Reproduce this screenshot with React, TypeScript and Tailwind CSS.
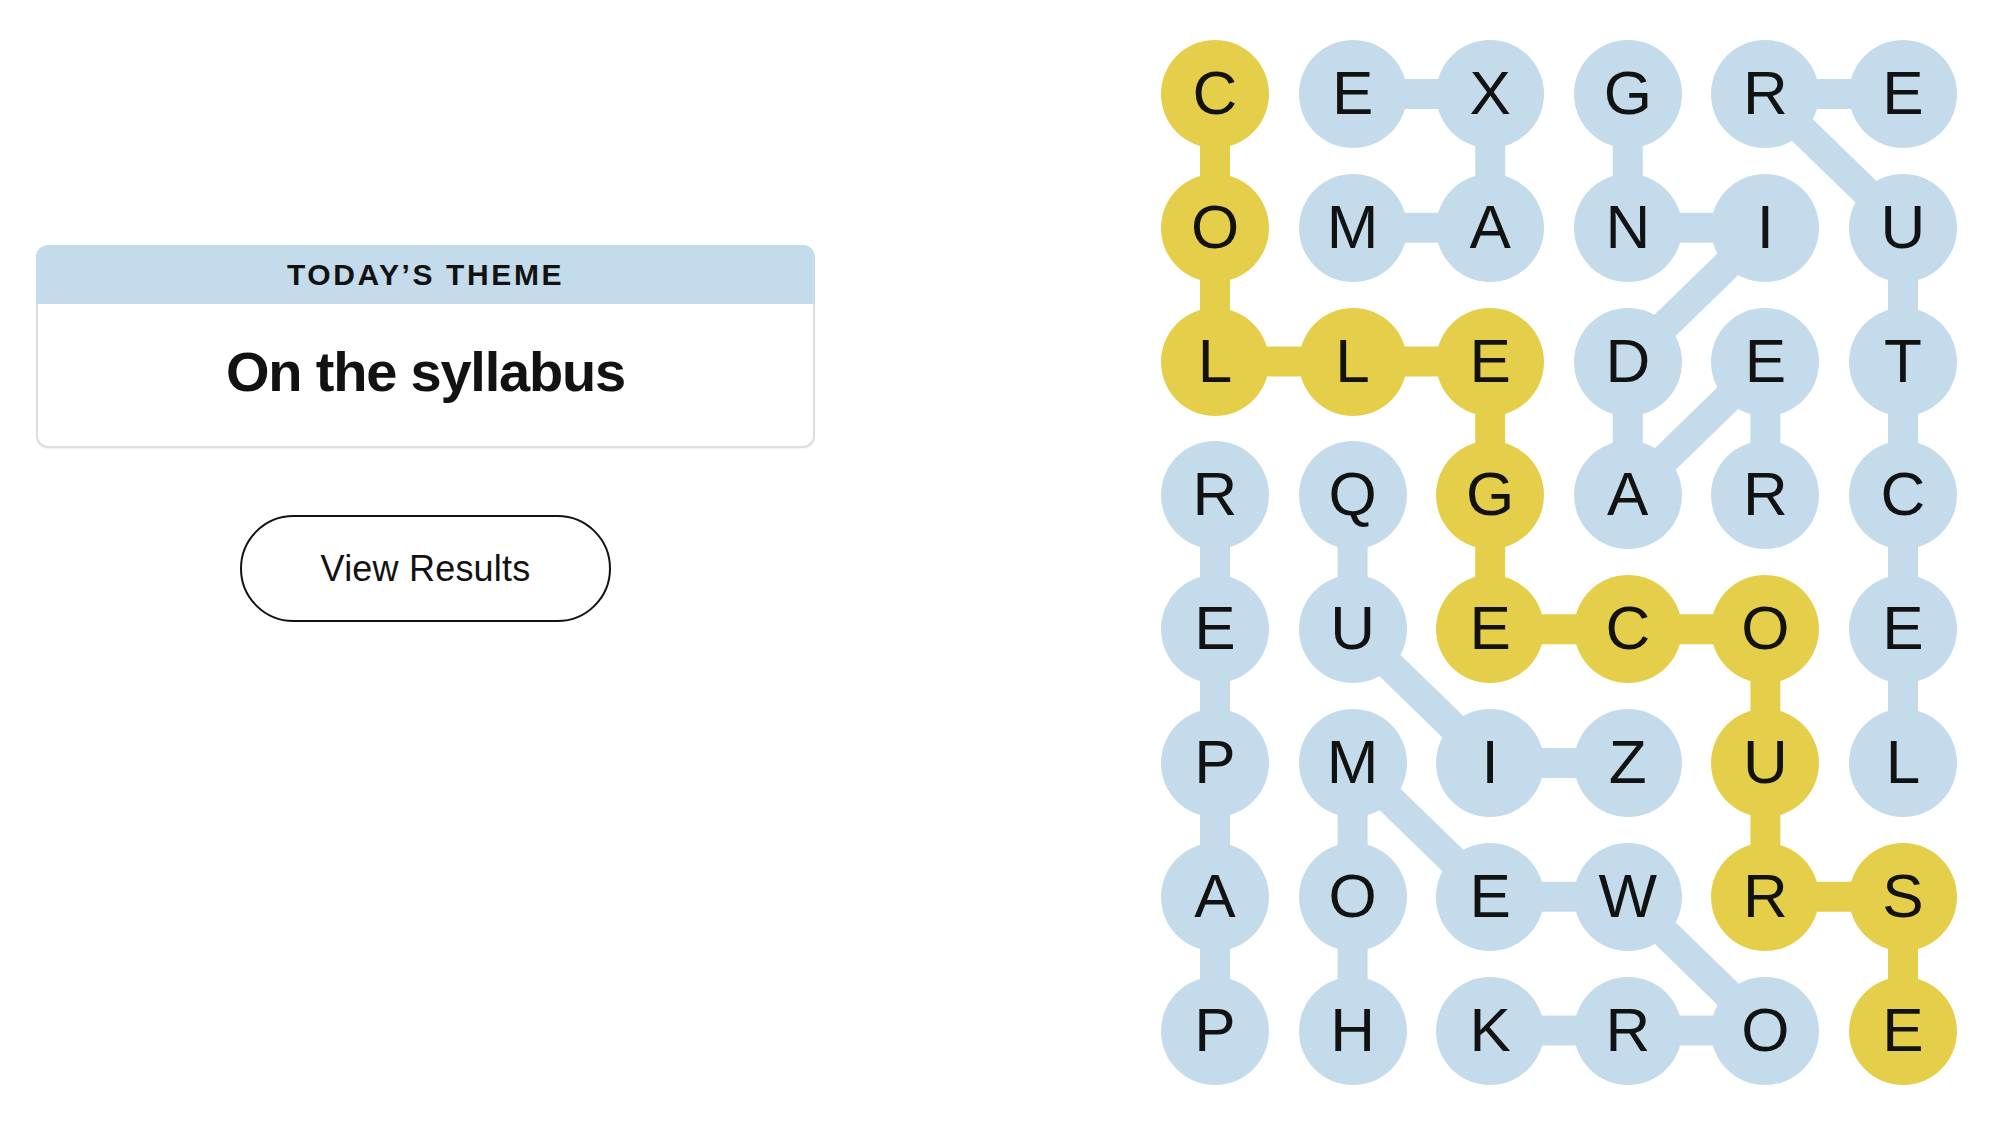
import React from 'react';

type Cell = [number, number];

const LETTERS = [
  'CEXGRE',
  'OMANIU',
  'LLEDET',
  'RQGARC',
  'EUECOE',
  'PMIZUL',
  'AOEWRS',
  'PHKROE',
];

const BLUE = '#c3dbea';
const YELLOW = '#e5cf4a';

// spangram path
const SPANGRAM: Cell[] = [
  [0, 0], [1, 0], [2, 0], [2, 1], [2, 2], [3, 2], [4, 2],
  [4, 3], [4, 4], [5, 4], [6, 4], [6, 5], [7, 5],
];

// theme words, each as an ordered path of cells
const WORDS: Cell[][] = [
  [[0, 1], [0, 2], [1, 2], [1, 1]], // EXAM
  [[3, 4], [2, 4], [3, 3], [2, 3], [1, 4], [1, 3], [0, 3]], // READING
  [[5, 5], [4, 5], [3, 5], [2, 5], [1, 5], [0, 4], [0, 5]], // LECTURE
  [[7, 0], [6, 0], [5, 0], [4, 0], [3, 0]], // PAPER
  [[3, 1], [4, 1], [5, 2], [5, 3]], // QUIZ
  [[7, 1], [6, 1], [5, 1], [6, 2], [6, 3], [7, 4], [7, 3], [7, 2]], // HOMEWORK
];

const SIZE = 108;
const PITCH_X = 137.6;
const PITCH_Y = 133.8;
const W = SIZE + PITCH_X * 5;
const H = SIZE + PITCH_Y * 7;

const cx = (c: number) => SIZE / 2 + c * PITCH_X;
const cy = (r: number) => SIZE / 2 + r * PITCH_Y;

function isSpangram(r: number, c: number) {
  return SPANGRAM.some(([a, b]) => a === r && b === c);
}

function PathLines({ cells, color }: { cells: Cell[]; color: string }) {
  return (
    <>
      {cells.slice(1).map(([r, c], i) => {
        const [pr, pc] = cells[i];
        return (
          <line
            key={i}
            x1={cx(pc)}
            y1={cy(pr)}
            x2={cx(c)}
            y2={cy(r)}
            stroke={color}
            strokeWidth={30}
          />
        );
      })}
    </>
  );
}

function Board() {
  return (
    <div className="relative" style={{ width: W, height: H }}>
      <svg className="absolute inset-0" width={W} height={H} viewBox={`0 0 ${W} ${H}`}>
        {WORDS.map((w, i) => (
          <PathLines key={i} cells={w} color={BLUE} />
        ))}
        <PathLines cells={SPANGRAM} color={YELLOW} />
      </svg>
      <div className="relative grid grid-cols-6 gap-x-[29.6px] gap-y-[25.8px]">
        {LETTERS.map((row, r) =>
          row.split('').map((ch, c) => (
            <button
              key={`${r}-${c}`}
              type="button"
              className={`flex h-[108px] w-[108px] items-center justify-center rounded-full pb-[2px] text-[62px] leading-none font-normal text-[#121212] ${
                isSpangram(r, c) ? 'bg-[#e5cf4a]' : 'bg-[#c3dbea]'
              }`}
            >
              {ch}
            </button>
          )),
        )}
      </div>
    </div>
  );
}

export default function App() {
  return (
    <div className="flex h-[1126px] w-[2000px] bg-white font-['Liberation_Sans',Arial,sans-serif] text-[#121212]">
      {/* Theme panel */}
      <div className="ml-[36px] flex w-[779px] flex-col items-center pt-[245px]">
        <div className="w-full rounded-[12px] shadow-[0_1px_2px_rgba(0,0,0,0.06)]">
          <div className="flex h-[59px] items-center justify-center rounded-t-[12px] bg-[#c3dbea]">
            <span className="text-[30px] font-bold tracking-[2.6px] uppercase">Today’s Theme</span>
          </div>
          <div className="flex h-[144px] items-center justify-center rounded-b-[12px] border-2 border-t-0 border-[#dedede] pb-[6px]">
            <h1 className="text-[56px] font-bold tracking-[-1.2px]">On the syllabus</h1>
          </div>
        </div>
        <button
          type="button"
          className="mt-[67px] flex h-[107px] w-[371px] items-center justify-center rounded-full border-2 border-[#121212] text-[36px] tracking-[0.2px]"
        >
          View Results
        </button>
      </div>

      {/* Board */}
      <div className="ml-auto pr-[43px] pt-[40px]">
        <Board />
      </div>
    </div>
  );
}
